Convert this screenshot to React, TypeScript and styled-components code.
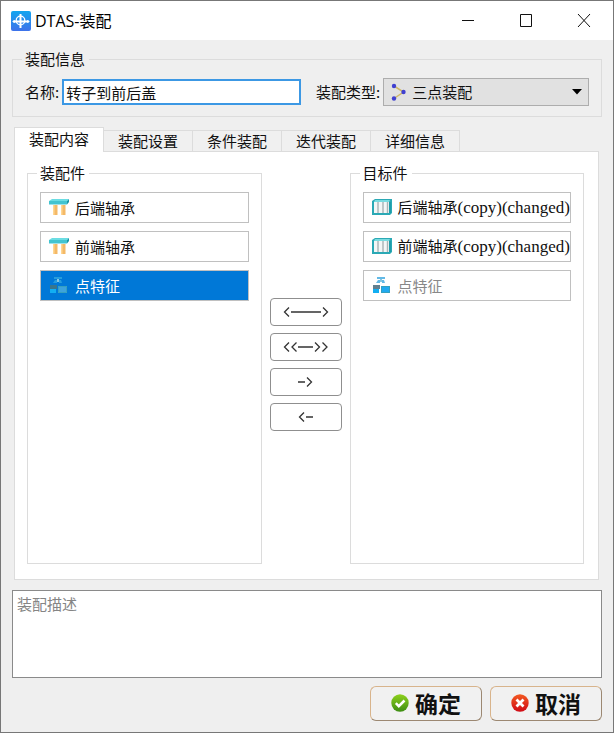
import React, { useState } from "react";
import styled, { createGlobalStyle } from "styled-components";

const GlobalStyle = createGlobalStyle`
  *, *::before, *::after { box-sizing: border-box; }
  body {
    margin: 0;
    background: #efefef;
  }
  body, button, input, select, textarea {
    font-family: "Noto Sans CJK SC", sans-serif;
    font-size: 15px;
    line-height: 20px;
    color: #111;
  }
`;

const Window = styled.div`
  display: flex;
  flex-direction: column;
  min-height: 100vh;
  border: 1px solid #777;
  background: #efefef;
`;

const TitleBar = styled.header`
  display: flex;
  align-items: center;
  height: 39px;
  padding-left: 10px;
  background: #fff;
`;

const Title = styled.h1`
  flex: 1;
  margin: 0 0 0 4px;
  font-family: "Open Sans", "Noto Sans CJK SC", sans-serif;
  font-size: 16px;
  font-weight: 400;
  color: #000;
`;

const CaptionButton = styled.button`
  display: flex;
  align-items: center;
  justify-content: center;
  width: 58px;
  height: 38px;
  padding: 0;
  border: 0;
  background: transparent;
`;

const Content = styled.main`
  display: flex;
  flex: 1;
  flex-direction: column;
  padding: 9px 11px 11px;
`;

const GroupBox = styled.fieldset`
  min-width: 0;
  margin: 0;
  padding: 0 12px;
  border: 1px solid #dcdcdc;
`;

const GroupTitle = styled.legend`
  margin-left: -3px;
  padding: 0 4px 0 3px;
`;

const FormRow = styled.div`
  display: flex;
  align-items: center;
  padding: 9px 0 10px;
`;

const FieldLabel = styled.label`
  flex: none;
  white-space: nowrap;
`;

const NameInput = styled.input`
  flex: 238 1 0;
  min-width: 0;
  height: 26px;
  margin: 0 15px 0 3px;
  padding: 0 2px;
  border: 2px solid #3c98e4;
  background: #fff;
  outline: none;
`;

const SelectBox = styled.div`
  display: grid;
  flex: 212 1 0;
  align-items: center;
  min-width: 0;
  margin-left: 3px;

  > * { grid-area: 1 / 1; }
  > svg { pointer-events: none; }
  > svg:first-of-type { margin-left: 8px; }
  > svg:last-of-type { justify-self: end; margin-right: 7px; }
`;

const TypeSelect = styled.select`
  width: 100%;
  height: 28px;
  padding: 0 24px 0 28px;
  border: 1px solid #adadad;
  border-radius: 0;
  background: #e1e1e1;
  appearance: none;
`;

const TabList = styled.div`
  display: flex;
  align-items: flex-end;
  height: 24px;
  margin: 10px 0 0 2px;
`;

const Tab = styled.button<{ $active: boolean }>`
  position: relative;
  flex: none;
  height: ${(p) => (p.$active ? 25 : 21)}px;
  margin-bottom: ${(p) => (p.$active ? -1 : 0)}px;
  padding: 0 14px 2px;
  border: 1px solid #dcdcdc;
  border-left-width: ${(p) => (p.$active ? 1 : 0)}px;
  border-bottom: 0;
  background: ${(p) => (p.$active ? "#fff" : "#f0f0f0")};
  white-space: nowrap;
`;

const TabPanel = styled.section`
  display: grid;
  flex: 1;
  grid-template-columns: 1fr 72px 1fr;
  gap: 8px;
  margin: 0 3px 0 2px;
  padding: 11px 14px 15px 12px;
  border: 1px solid #dcdcdc;
  background: #fff;
`;

const PartList = styled.ul`
  display: flex;
  flex-direction: column;
  gap: 8px;
  margin: 0;
  padding: 9px 0;
  list-style: none;
`;

const PartButton = styled.button<{ $selected: boolean }>`
  display: flex;
  align-items: center;
  gap: 6px;
  width: 100%;
  height: 31px;
  padding: 0 0 0 8px;
  border: 1px solid #c0c0c0;
  background: ${(p) => (p.$selected ? "#0078d7" : "#fff")};
  color: ${(p) => (p.$selected ? "#fff" : "#111")};
  white-space: nowrap;

  &:disabled { color: #888; }
  > svg { flex: none; }
`;

const Suffix = styled.span`
  font-family: "Liberation Serif", serif;
  font-size: 17px;
`;

const TransferColumn = styled.div`
  display: flex;
  flex-direction: column;
  gap: 7px;
  padding-top: 135px;
`;

const TransferButton = styled.button`
  display: flex;
  align-items: center;
  justify-content: center;
  height: 28px;
  padding: 0;
  border: 1px solid #8f8f8f;
  border-radius: 4px;
  background: #fff;
`;

const Description = styled.textarea`
  display: block;
  flex: none;
  width: 100%;
  height: 88px;
  margin: 10px 0 8px;
  padding: 3px 4px;
  border: 1px solid #8a8a8a;
  background: #fff;
  resize: none;
  outline: none;

  &::placeholder { color: #858585; opacity: 1; }
`;

const Actions = styled.footer`
  display: flex;
  justify-content: flex-end;
  gap: 8px;
`;

const ActionButton = styled.button`
  display: flex;
  align-items: center;
  justify-content: center;
  gap: 6px;
  width: 112px;
  height: 35px;
  padding: 0 0 2px;
  border: 1px solid;
  border-color: #d8b48c #9c8872 #9c8872 #d8b48c;
  border-radius: 6px;
  background: #f1f1f1;
  font-size: 23px;
  font-weight: 700;
`;

const AppLogo = () => (
  <svg width="20" height="20" viewBox="0 0 20 20" aria-hidden="true">
    <defs>
      <linearGradient id="logo" x1="0" y1="0" x2="0" y2="1">
        <stop offset="0" stopColor="#12a5ef" />
        <stop offset="1" stopColor="#3e72ea" />
      </linearGradient>
    </defs>
    <rect width="20" height="20" rx="2" fill="url(#logo)" />
    <circle cx="9.5" cy="9.5" r="4.3" fill="none" stroke="#fff" strokeWidth="1.3" />
    <path d="M9.5 3v14M2 10.5h16" stroke="#fff" strokeWidth="2" />
    <path d="M1 10.5l3-1.500v3zM19 10.5l-3-1.500v3z" fill="#fff" />
  </svg>
);

const ColumnsIcon = () => (
  <svg width="20" height="20" viewBox="0 0 20 20" aria-hidden="true">
    <path d="M4 7h4.5v10H4zM12 7h4.5v10H12z" fill="#f4b967" />
    <path d="M4 7h1.5v10H4zM12 7h1.5v10H12z" fill="#ffd793" />
    <path d="M3 1h17l-2 2H0z" fill="#6bdde3" />
    <path d="M0 3h18v3.500H0z" fill="#43c4d0" />
    <path d="m18 3 2-2v3l-2 2.500z" fill="#1996a7" />
  </svg>
);

const FrameIcon = () => (
  <svg width="20" height="20" viewBox="0 0 20 20" aria-hidden="true">
    <path d="M3 1h17v14l-2 2H0V3z" fill="#2ba9b5" />
    <path d="M3 2h15l-1 2H2z" fill="#79dbe0" />
    <path d="M2 4h15v11H2z" fill="#f3f6f6" />
    <path d="M6 4v11M11 4v11M15.500 4v11" stroke="#a8b3b5" strokeWidth="1.4" />
    <path d="M18 4v11" stroke="#15919f" />
  </svg>
);

const FeatureIcon = ({ selected = false }: { selected?: boolean }) => (
  <svg width="20" height="20" viewBox="0 0 20 20" aria-hidden="true">
    <path d="M5 1h8v2H5zM6 4h2v3H4zM10 4h2l1 3h-3z" fill={selected ? "#269ddd" : "#62b9e6"} />
    <path d="M8 3h2v3H8z" fill="#87c7e1" />
    <path d="M1 9h7v4H1z" fill={selected ? "#39768c" : "#627f8e"} />
    <path d="M1 13h6v4H1z" fill="#12aef2" />
    <path d="M9 10h9v7H9z" fill={selected ? "#3da3dc" : "#20aaf0"} />
    <path d="M9.5 10.5h8v6h-8z" fill="none" stroke="#35a0bf" />
  </svg>
);

const ThreePointIcon = () => (
  <svg width="16" height="18" viewBox="0 0 16 18" aria-hidden="true">
    <path d="m3 3 9.5 6L3 15.500" fill="none" stroke="#cfb867" strokeWidth="1.5" />
    <g fill="#4040d0">
      <circle cx="3" cy="3" r="2.2" />
      <circle cx="12.500" cy="9" r="2.200" />
      <circle cx="3" cy="15.500" r="2.200" />
    </g>
  </svg>
);

const DropArrow = () => (
  <svg width="10" height="6" viewBox="0 0 10 6" aria-hidden="true">
    <path d="M0 0h10L5 5.500z" fill="#000" />
  </svg>
);

const CheckIcon = () => (
  <svg width="18" height="18" viewBox="0 0 18 18" aria-hidden="true">
    <defs>
      <linearGradient id="ok" x1="0" y1="0" x2="0" y2="1">
        <stop offset="0" stopColor="#8ed11d" />
        <stop offset="1" stopColor="#3e8d13" />
      </linearGradient>
    </defs>
    <circle cx="9" cy="9" r="8.700" fill="url(#ok)" />
    <path d="m4.800 9.200 3 3 5.700-5.700" fill="none" stroke="#fff" strokeWidth="2.500" />
  </svg>
);

const CrossIcon = () => (
  <svg width="18" height="18" viewBox="0 0 18 18" aria-hidden="true">
    <defs>
      <linearGradient id="cancel" x1="0" y1="0" x2="0" y2="1">
        <stop offset="0" stopColor="#f35a22" />
        <stop offset="1" stopColor="#d00b16" />
      </linearGradient>
    </defs>
    <circle cx="9" cy="9" r="8.700" fill="url(#cancel)" />
    <path d="m5.500 5.500 7 7m0-7-7 7" stroke="#fff" strokeWidth="2.800" />
  </svg>
);

const CaptionIcon = ({ d }: { d: string }) => (
  <svg width="14" height="14" viewBox="0 0 14 14" aria-hidden="true">
    <path d={d} fill="none" stroke="#111" />
  </svg>
);

const TransferIcon = ({ d }: { d: string }) => (
  <svg width="46" height="12" viewBox="0 0 46 12" aria-hidden="true">
    <path d={d} fill="none" stroke="#333" strokeWidth="1.300" />
  </svg>
);

const captions = [
  { label: "最小化", d: "M1 6.500h12" },
  { label: "最大化", d: "M1.500 0.500h11v12h-11z" },
  { label: "关闭", d: "m1 0 12 13m0-13L1 13" },
];

const tabs = ["装配内容", "装配设置", "条件装配", "迭代装配", "详细信息"];

const transfers = [
  { label: "全长对应", d: "M6 1.500 1.500 6 6 10.500M8 6h30M40 1.500 44.500 6 40 10.500" },
  { label: "全部对应", d: "M6 1.500 1.500 6 6 10.500M13.500 1.500 9 6l4.500 4.500M15 6h15M32 1.500 36.500 6 32 10.500M39.500 1.500 44 6l-4.500 4.500" },
  { label: "向右", d: "M15 6h7M24 1.500 28.500 6 24 10.500" },
  { label: "向左", d: "M21 1.500 16.500 6l4.500 4.500M23 6h7" },
];

type Part = { name: string; suffix?: string; kind: "columns" | "frame" | "feature"; disabled?: boolean };

const sourceParts: Part[] = [
  { name: "后端轴承", kind: "columns" },
  { name: "前端轴承", kind: "columns" },
  { name: "点特征", kind: "feature" },
];

const targetParts: Part[] = [
  { name: "后端轴承", suffix: "(copy)(changed)", kind: "frame" },
  { name: "前端轴承", suffix: "(copy)(changed)", kind: "frame" },
  { name: "点特征", kind: "feature", disabled: true },
];

function PartGroup({ title, parts, initial }: { title: string; parts: Part[]; initial: number }) {
  const [selected, setSelected] = useState(initial);
  return (
    <GroupBox>
      <GroupTitle>{title}</GroupTitle>
      <PartList>
        {parts.map((part, i) => (
          <li key={part.name}>
            <PartButton
              type="button"
              $selected={selected === i}
              aria-pressed={selected === i}
              disabled={part.disabled}
              onClick={() => setSelected(i)}
            >
              {part.kind === "columns" && <ColumnsIcon />}
              {part.kind === "frame" && <FrameIcon />}
              {part.kind === "feature" && <FeatureIcon selected={selected === i} />}
              <span>
                {part.name}
                {part.suffix && <Suffix>{part.suffix}</Suffix>}
              </span>
            </PartButton>
          </li>
        ))}
      </PartList>
    </GroupBox>
  );
}

export default function App() {
  const [activeTab, setActiveTab] = useState(0);
  return (
    <>
      <GlobalStyle />
      <Window>
        <TitleBar>
          <AppLogo />
          <Title>DTAS-装配</Title>
          {captions.map((c) => (
            <CaptionButton key={c.label} type="button" aria-label={c.label}>
              <CaptionIcon d={c.d} />
            </CaptionButton>
          ))}
        </TitleBar>
        <Content>
          <GroupBox>
            <GroupTitle>装配信息</GroupTitle>
            <FormRow>
              <FieldLabel htmlFor="name">名称:</FieldLabel>
              <NameInput id="name" defaultValue="转子到前后盖" />
              <FieldLabel htmlFor="type">装配类型:</FieldLabel>
              <SelectBox>
                <TypeSelect id="type">
                  <option>三点装配</option>
                </TypeSelect>
                <ThreePointIcon />
                <DropArrow />
              </SelectBox>
            </FormRow>
          </GroupBox>
          <TabList role="tablist">
            {tabs.map((tab, i) => (
              <Tab
                key={tab}
                type="button"
                role="tab"
                id={`tab-${i}`}
                aria-selected={activeTab === i}
                aria-controls="panel"
                $active={activeTab === i}
                onClick={() => setActiveTab(i)}
              >
                {tab}
              </Tab>
            ))}
          </TabList>
          <TabPanel role="tabpanel" id="panel" aria-labelledby={`tab-${activeTab}`}>
            <PartGroup title="装配件" parts={sourceParts} initial={2} />
            <TransferColumn>
              {transfers.map((t) => (
                <TransferButton key={t.label} type="button" aria-label={t.label}>
                  <TransferIcon d={t.d} />
                </TransferButton>
              ))}
            </TransferColumn>
            <PartGroup title="目标件" parts={targetParts} initial={-1} />
          </TabPanel>
          <Description aria-label="装配描述" placeholder="装配描述" />
          <Actions>
            <ActionButton type="button">
              <CheckIcon />
              确定
            </ActionButton>
            <ActionButton type="button">
              <CrossIcon />
              取消
            </ActionButton>
          </Actions>
        </Content>
      </Window>
    </>
  );
}
